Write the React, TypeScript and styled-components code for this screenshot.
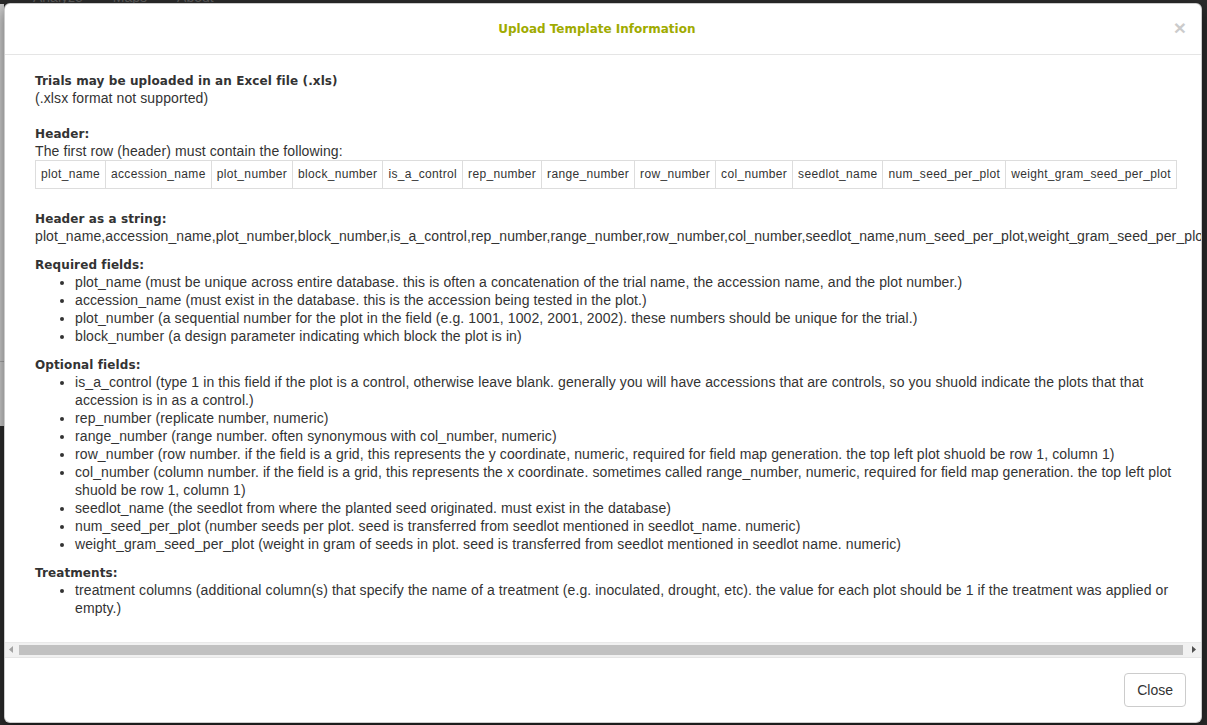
import React from 'react';
import styled, { createGlobalStyle } from 'styled-components';

const GlobalStyle = createGlobalStyle`
  html, body { margin: 0; padding: 0; background: #2c2c2c; overflow: hidden; }
  body { font-family: "Liberation Sans", Arial, sans-serif; }
`;

const Page = styled.div`
  position: relative;
  width: 1207px;
  height: 725px;
  overflow: hidden;
  background: #2c2c2c;
`;

const NavBar = styled.div`
  height: 4px;
  overflow: hidden;
  display: flex;
  padding-left: 18px;
`;

const NavItem = styled.span`
  font: 14px/20px "Liberation Sans", Arial, sans-serif;
  color: #5c5c5c;
  padding: 0 15px;
  margin-top: -13px;
  white-space: nowrap;
`;

const SideStrip = styled.div`
  width: 4px;
  height: 422px;
  background: #cdcdcd;
  display: flex;
  flex-direction: column;
`;

const StripRule = styled.div`
  margin-top: 357px;
  height: 1px;
  background: #a8a8a8;
`;

const Modal = styled.div`
  position: absolute;
  top: 3px;
  left: 4px;
  width: 1198px;
  box-sizing: border-box;
  background: #fff;
  border: 1px solid rgba(0, 0, 0, 0.2);
  border-radius: 6px;
  box-shadow: 0 5px 15px rgba(0, 0, 0, 0.5);
  display: flex;
  flex-direction: column;
  font-family: "Liberation Sans", Arial, sans-serif;
  color: #333;
`;

const Header = styled.div`
  display: flex;
  align-items: flex-start;
  padding: 15px;
  border-bottom: 1px solid #e5e5e5;
`;

const Title = styled.h4`
  flex: 1;
  margin: 0;
  text-align: center;
  font: bold 12px/20px "DejaVu Sans", sans-serif;
  color: #a0ab00;
`;

const CloseX = styled.button`
  margin-top: -2px;
  padding: 0;
  border: 0;
  background: transparent;
  font: bold 21px/21px "Liberation Sans", Arial, sans-serif;
  color: #000;
  opacity: 0.2;
  cursor: pointer;
`;

const Body = styled.div`
  padding: 16px 0 15px 30px;
  overflow: hidden;
  font-size: 14px;
  line-height: 18px;
  letter-spacing: 0.1px;
`;

const Content = styled.div`
  padding-right: 28px;
`;

const Heading = styled.div<{ $gap?: number }>`
  font: bold 12px/16px "DejaVu Sans", sans-serif;
  padding-top: 2px;
  letter-spacing: 0.1px;
  margin-top: ${(p) => p.$gap ?? 0}px;
`;

const Line = styled.div<{ $after?: number }>`
  margin-bottom: ${(p) => p.$after ?? 0}px;
  white-space: nowrap;
`;

const Table = styled.table`
  border-collapse: collapse;
  margin: 0 0 20px;
  font-size: 12px;
  line-height: 17px;
  letter-spacing: 0.33px;
`;

const Cell = styled.td`
  border: 1px solid #ddd;
  padding: 5px;
  white-space: nowrap;
`;

const List = styled.ul`
  margin: 0 0 10px;
  padding-left: 40px;
`;

const Item = styled.li``;

const ScrollBar = styled.div`
  display: flex;
  align-items: center;
  height: 15px;
  background: #f1f1f1;
  box-shadow: inset 0 1px 0 #e9e9e9;
`;

const ScrollButton = styled.div<{ $wide?: boolean; $pad: number }>`
  width: ${(p) => (p.$wide ? 15 : 14)}px;
  height: 15px;
  box-sizing: border-box;
  padding-left: ${(p) => p.$pad}px;
  display: flex;
  align-items: center;
  flex: none;
`;

const Thumb = styled.div`
  flex: 1;
  height: 10px;
  margin: 1px 3px 0 0;
  background: #c1c1c1;
`;

const Footer = styled.div`
  padding: 15px;
  border-top: 1px solid #e5e5e5;
  display: flex;
  justify-content: flex-end;
`;

const Button = styled.button`
  font: 14px/20px "Liberation Sans", Arial, sans-serif;
  color: #333;
  background: #fff;
  border: 1px solid #ccc;
  border-radius: 4px;
  padding: 6px 12px;
  cursor: pointer;
`;

const columns = [
  'plot_name',
  'accession_name',
  'plot_number',
  'block_number',
  'is_a_control',
  'rep_number',
  'range_number',
  'row_number',
  'col_number',
  'seedlot_name',
  'num_seed_per_plot',
  'weight_gram_seed_per_plot',
];

const required = [
  'plot_name (must be unique across entire database. this is often a concatenation of the trial name, the accession name, and the plot number.)',
  'accession_name (must exist in the database. this is the accession being tested in the plot.)',
  'plot_number (a sequential number for the plot in the field (e.g. 1001, 1002, 2001, 2002). these numbers should be unique for the trial.)',
  'block_number (a design parameter indicating which block the plot is in)',
];

const optional = [
  'is_a_control (type 1 in this field if the plot is a control, otherwise leave blank. generally you will have accessions that are controls, so you shuold indicate the plots that that accession is in as a control.)',
  'rep_number (replicate number, numeric)',
  'range_number (range number. often synonymous with col_number, numeric)',
  'row_number (row number. if the field is a grid, this represents the y coordinate, numeric, required for field map generation. the top left plot shuold be row 1, column 1)',
  'col_number (column number. if the field is a grid, this represents the x coordinate. sometimes called range_number, numeric, required for field map generation. the top left plot shuold be row 1, column 1)',
  'seedlot_name (the seedlot from where the planted seed originated. must exist in the database)',
  'num_seed_per_plot (number seeds per plot. seed is transferred from seedlot mentioned in seedlot_name. numeric)',
  'weight_gram_seed_per_plot (weight in gram of seeds in plot. seed is transferred from seedlot mentioned in seedlot name. numeric)',
];

const treatments = [
  'treatment columns (additional column(s) that specify the name of a treatment (e.g. inoculated, drought, etc). the value for each plot should be 1 if the treatment was applied or empty.)',
];

const Arrow = ({ dir, color }: { dir: 'left' | 'right'; color: string }) => (
  <svg width="4" height="7" viewBox="0 0 4 7">
    <polygon points={dir === 'left' ? '4,0 4,7 0,3.5' : '0,0 0,7 4,3.5'} fill={color} />
  </svg>
);

export default function App() {
  return (
    <>
      <GlobalStyle />
      <Page>
        <NavBar>
          <NavItem>Analyze</NavItem>
          <NavItem>Maps</NavItem>
          <NavItem>About</NavItem>
        </NavBar>
        <SideStrip>
          <StripRule />
        </SideStrip>
        <Modal>
          <Header>
            <Title>Upload Template Information</Title>
            <CloseX aria-label="Close">×</CloseX>
          </Header>
          <Body>
            <Content>
              <Heading>Trials may be uploaded in an Excel file (.xls)</Heading>
              <Line>(.xlsx format not supported)</Line>

              <Heading $gap={17}>Header:</Heading>
              <Line>The first row (header) must contain the following:</Line>
              <Table>
                <tbody>
                  <tr>
                    {columns.map((c) => (
                      <Cell key={c}>{c}</Cell>
                    ))}
                  </tr>
                </tbody>
              </Table>

              <Heading>Header as a string:</Heading>
              <Line $after={10}>{columns.join(',')}</Line>

              <Heading>Required fields:</Heading>
              <List>
                {required.map((t) => (
                  <Item key={t}>{t}</Item>
                ))}
              </List>

              <Heading>Optional fields:</Heading>
              <List>
                {optional.map((t) => (
                  <Item key={t}>{t}</Item>
                ))}
              </List>

              <Heading>Treatments:</Heading>
              <List>
                {treatments.map((t) => (
                  <Item key={t}>{t}</Item>
                ))}
              </List>
            </Content>
          </Body>
          <ScrollBar>
            <ScrollButton $pad={4}>
              <Arrow dir="left" color="#a3a3a3" />
            </ScrollButton>
            <Thumb />
            <ScrollButton $wide $pad={6}>
              <Arrow dir="right" color="#505050" />
            </ScrollButton>
          </ScrollBar>
          <Footer>
            <Button>Close</Button>
          </Footer>
        </Modal>
      </Page>
    </>
  );
}
